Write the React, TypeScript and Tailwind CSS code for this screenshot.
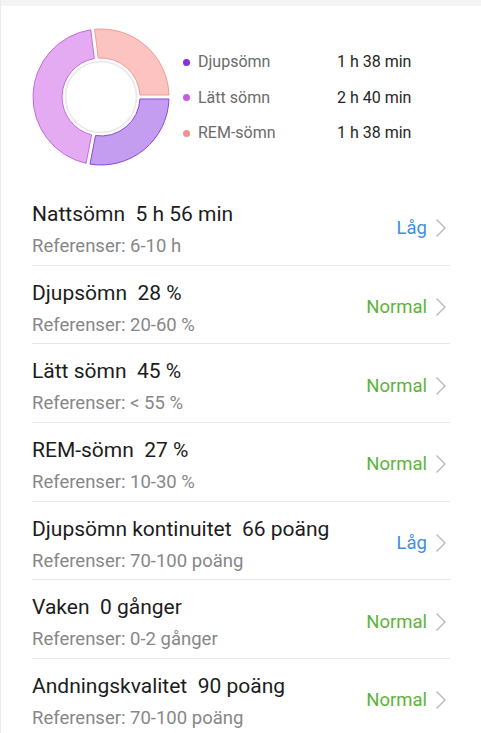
import React from "react";

type Segment = {
  key: string;
  start: number;
  end: number;
  fill: string;
  stroke: string;
};

const segments: Segment[] = [
  { key: "djup", start: 0, end: 101, fill: "#c49cf0", stroke: "#8d49d8" },
  { key: "latt", start: 101, end: 263, fill: "#e4abf3", stroke: "#c769de" },
  { key: "rem", start: 263, end: 360, fill: "#fdc3c0", stroke: "#ef9c96" },
];

const legend = [
  { label: "Djupsömn", value: "1 h 38 min", dot: "bg-[#8a30d6]" },
  { label: "Lätt sömn", value: "2 h 40 min", dot: "bg-[#c75be1]" },
  { label: "REM-sömn", value: "1 h 38 min", dot: "bg-[#f3918b]" },
];

const rows = [
  { title: "Nattsömn", value: "5 h 56 min", ref: "Referenser: 6-10 h", status: "Låg" },
  { title: "Djupsömn", value: "28 %", ref: "Referenser: 20-60 %", status: "Normal" },
  { title: "Lätt sömn", value: "45 %", ref: "Referenser: < 55 %", status: "Normal" },
  { title: "REM-sömn", value: "27 %", ref: "Referenser: 10-30 %", status: "Normal" },
  { title: "Djupsömn kontinuitet", value: "66 poäng", ref: "Referenser: 70-100 poäng", status: "Låg" },
  { title: "Vaken", value: "0 gånger", ref: "Referenser: 0-2 gånger", status: "Normal" },
  { title: "Andningskvalitet", value: "90 poäng", ref: "Referenser: 70-100 poäng", status: "Normal" },
];

const CX = 70;
const CY = 70;
const R_OUT = 68;
const R_IN = 39;
const GAP = 2;

const pt = (r: number, deg: number) => {
  const a = (deg * Math.PI) / 180;
  return `${(CX + r * Math.cos(a)).toFixed(2)} ${(CY + r * Math.sin(a)).toFixed(2)}`;
};

const arcPath = (s: Segment) => {
  const dO = (Math.asin(GAP / R_OUT) * 180) / Math.PI;
  const dI = (Math.asin(GAP / R_IN) * 180) / Math.PI;
  const o0 = s.start + dO;
  const o1 = s.end - dO;
  const i0 = s.start + dI;
  const i1 = s.end - dI;
  const largeO = o1 - o0 > 180 ? 1 : 0;
  const largeI = i1 - i0 > 180 ? 1 : 0;
  return `M ${pt(R_OUT, o0)} A ${R_OUT} ${R_OUT} 0 ${largeO} 1 ${pt(R_OUT, o1)} L ${pt(R_IN, i1)} A ${R_IN} ${R_IN} 0 ${largeI} 0 ${pt(R_IN, i0)} Z`;
};

const Donut = () => (
  <svg width="140" height="140" viewBox="0 0 140 140" className="shrink-0">
    {segments.map((s) => (
      <path key={s.key} d={arcPath(s)} fill={s.fill} stroke={s.stroke} strokeWidth="1" />
    ))}
    <circle cx={CX} cy={CY} r="35.5" fill="#ffffff" stroke="#e8e8e8" strokeWidth="1.5" />
  </svg>
);

const Chevron = () => (
  <svg width="12" height="20" viewBox="0 0 12 20" className="shrink-0">
    <path d="M1.5 1.5 L10 10 L1.5 18.5" fill="none" stroke="#b8b8b8" strokeWidth="1.4" strokeLinejoin="round" />
  </svg>
);

export default function App() {
  return (
    <div
      className="w-[481px] h-[733px] overflow-hidden bg-white border-l border-[#ececec]"
      style={{ fontFamily: "Roboto, 'Noto Sans', sans-serif" }}
    >
      <div className="h-[6px] bg-[#f4f4f4]" />

      <div className="flex items-center pt-[21px] pb-[20px] pl-[30px]">
        <Donut />
        <div className="ml-[11px] flex flex-col pt-[1px]">
          {legend.map((l) => (
            <div key={l.label} className="flex items-center h-[35.5px] text-[16px]">
              <span className="w-2 flex justify-center">
                <span className={`w-[7px] h-[7px] rounded-full ${l.dot}`} />
              </span>
              <span className="ml-2 w-[139px] text-[#6b6b6b]">{l.label}</span>
              <span className="text-[#262626]">{l.value}</span>
            </div>
          ))}
        </div>
      </div>

      <div className="px-[31px]">
        {rows.map((r) => (
          <div
            key={r.title}
            className="flex justify-between h-[78.67px] border-b border-[#e8e8e8]"
          >
            <div className="flex flex-col pt-[15px]">
              <div className="text-[21px] leading-[24px] text-[#1c1c1c] whitespace-pre">
                {r.title}  {r.value}
              </div>
              <div className="mt-[9px] text-[18.5px] leading-[22px] text-[#878787]">
                {r.ref}
              </div>
            </div>
            <div className="flex items-center pt-[5px] pr-[3px]">
              <span
                className={`text-[18.5px] leading-[22px] mr-[8px] ${
                  r.status === "Låg" ? "text-[#3d8fe4]" : "text-[#5db33a]"
                }`}
              >
                {r.status}
              </span>
              <Chevron />
            </div>
          </div>
        ))}
      </div>
    </div>
  );
}
